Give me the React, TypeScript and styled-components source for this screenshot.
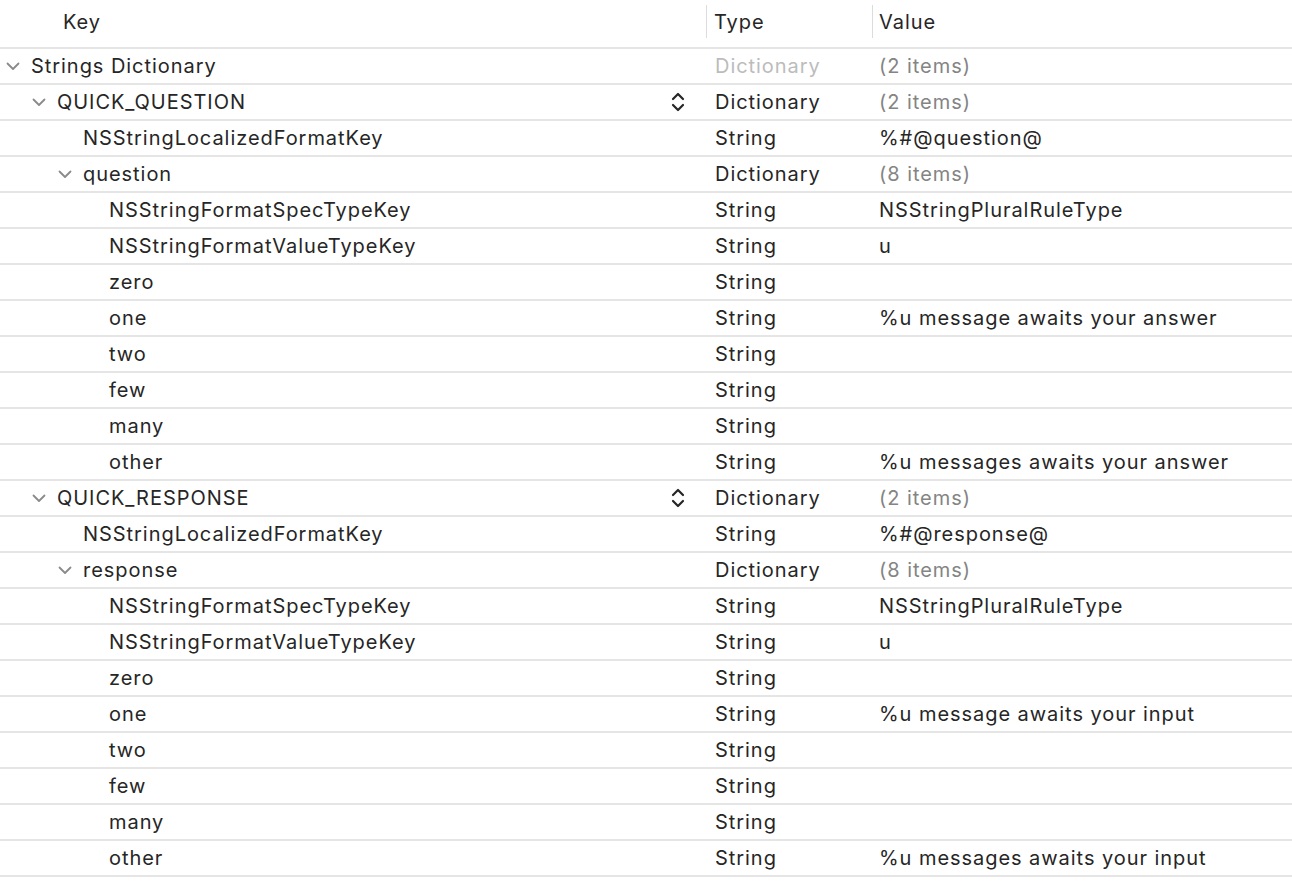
import React from "react";
import styled, { createGlobalStyle } from "styled-components";

type Row = {
  key: string;
  level: number;
  open?: boolean;
  stepper?: boolean;
  type: string;
  typeDim?: boolean;
  value?: string;
  count?: boolean;
};

const plural = (name: string, one: string, other: string): Row[] => [
  { key: name === "question" ? "QUICK_QUESTION" : "QUICK_RESPONSE", level: 1, open: true, stepper: true, type: "Dictionary", value: "(2 items)", count: true },
  { key: "NSStringLocalizedFormatKey", level: 2, type: "String", value: `%#@${name}@` },
  { key: name, level: 2, open: true, type: "Dictionary", value: "(8 items)", count: true },
  { key: "NSStringFormatSpecTypeKey", level: 3, type: "String", value: "NSStringPluralRuleType" },
  { key: "NSStringFormatValueTypeKey", level: 3, type: "String", value: "u" },
  { key: "zero", level: 3, type: "String" },
  { key: "one", level: 3, type: "String", value: one },
  { key: "two", level: 3, type: "String" },
  { key: "few", level: 3, type: "String" },
  { key: "many", level: 3, type: "String" },
  { key: "other", level: 3, type: "String", value: other },
];

const rows: Row[] = [
  { key: "Strings Dictionary", level: 0, open: true, type: "Dictionary", typeDim: true, value: "(2 items)", count: true },
  ...plural("question", "%u message awaits your answer", "%u messages awaits your answer"),
  ...plural("response", "%u message awaits your input", "%u messages awaits your input"),
];

const GlobalStyle = createGlobalStyle`
  body {
    margin: 0;
    background: #ffffff;
    font-family: Inter, "Noto Sans", sans-serif;
    color: #262626;
    -webkit-font-smoothing: antialiased;
  }
`;

const Table = styled.div`
  width: 1292px;
  display: flex;
  flex-direction: column;
`;

const HeaderRow = styled.div`
  display: grid;
  grid-template-columns: 706px 166px 1fr;
  height: 47px;
  border-bottom: 2px solid #e5e5e5;
  font-size: 20px;
  letter-spacing: 0.95px;
`;

const HeaderCell = styled.div<{ $divider?: boolean; $pad: number }>`
  display: flex;
  align-items: center;
  padding: 0 0 4px ${(p) => p.$pad}px;
  position: relative;
  &::before {
    content: "";
    display: ${(p) => (p.$divider ? "block" : "none")};
    position: absolute;
    left: 0;
    top: 5px;
    bottom: 9px;
    width: 1px;
    background: #dcdcdc;
  }
`;

const BodyRow = styled.div`
  display: grid;
  grid-template-columns: 706px 166px 1fr;
  height: 34px;
  border-bottom: 2px solid #e5e5e5;
  font-size: 20px;
  letter-spacing: 0.95px;
  white-space: nowrap;
`;

const KeyCell = styled.div<{ $level: number }>`
  display: flex;
  align-items: center;
  padding-left: ${(p) => 6 + p.$level * 26}px;
  padding-right: 20px;
`;

const Disclosure = styled.span`
  width: 25px;
  flex: none;
  display: flex;
  align-items: center;
`;

const KeyText = styled.span`
  flex: 1;
`;

const Cell = styled.div<{ $muted?: "light" | "mid" }>`
  display: flex;
  align-items: center;
  padding-left: 7px;
  color: ${(p) =>
    p.$muted === "light" ? "#bcbcbc" : p.$muted === "mid" ? "#848484" : "#262626"};
`;

const TypeCell = styled(Cell)`
  padding-left: 9px;
`;

const Chevron = () => (
  <svg width="14" height="9" viewBox="0 0 14 9" fill="none">
    <path d="M1.5 1.5 L7 7 L12.5 1.5" stroke="#8a8a8a" strokeWidth="1.8" strokeLinecap="round" strokeLinejoin="round" />
  </svg>
);

const Stepper = () => (
  <svg width="16" height="22" viewBox="0 0 16 22" fill="none">
    <path d="M3 8 L8 3 L13 8" stroke="#262626" strokeWidth="2.2" strokeLinecap="round" strokeLinejoin="round" />
    <path d="M3 14 L8 19 L13 14" stroke="#262626" strokeWidth="2.2" strokeLinecap="round" strokeLinejoin="round" />
  </svg>
);

export default function App() {
  return (
    <>
      <GlobalStyle />
      <Table>
        <HeaderRow>
          <HeaderCell $pad={63}>Key</HeaderCell>
          <HeaderCell $pad={8} $divider>Type</HeaderCell>
          <HeaderCell $pad={7} $divider>Value</HeaderCell>
        </HeaderRow>
        {rows.map((r, i) => (
          <BodyRow key={i}>
            <KeyCell $level={r.level}>
              <Disclosure>{r.open && <Chevron />}</Disclosure>
              <KeyText>{r.key}</KeyText>
              {r.stepper && <Stepper />}
            </KeyCell>
            <TypeCell $muted={r.typeDim ? "light" : undefined}>{r.type}</TypeCell>
            <Cell $muted={r.count ? "mid" : undefined}>{r.value}</Cell>
          </BodyRow>
        ))}
      </Table>
    </>
  );
}
